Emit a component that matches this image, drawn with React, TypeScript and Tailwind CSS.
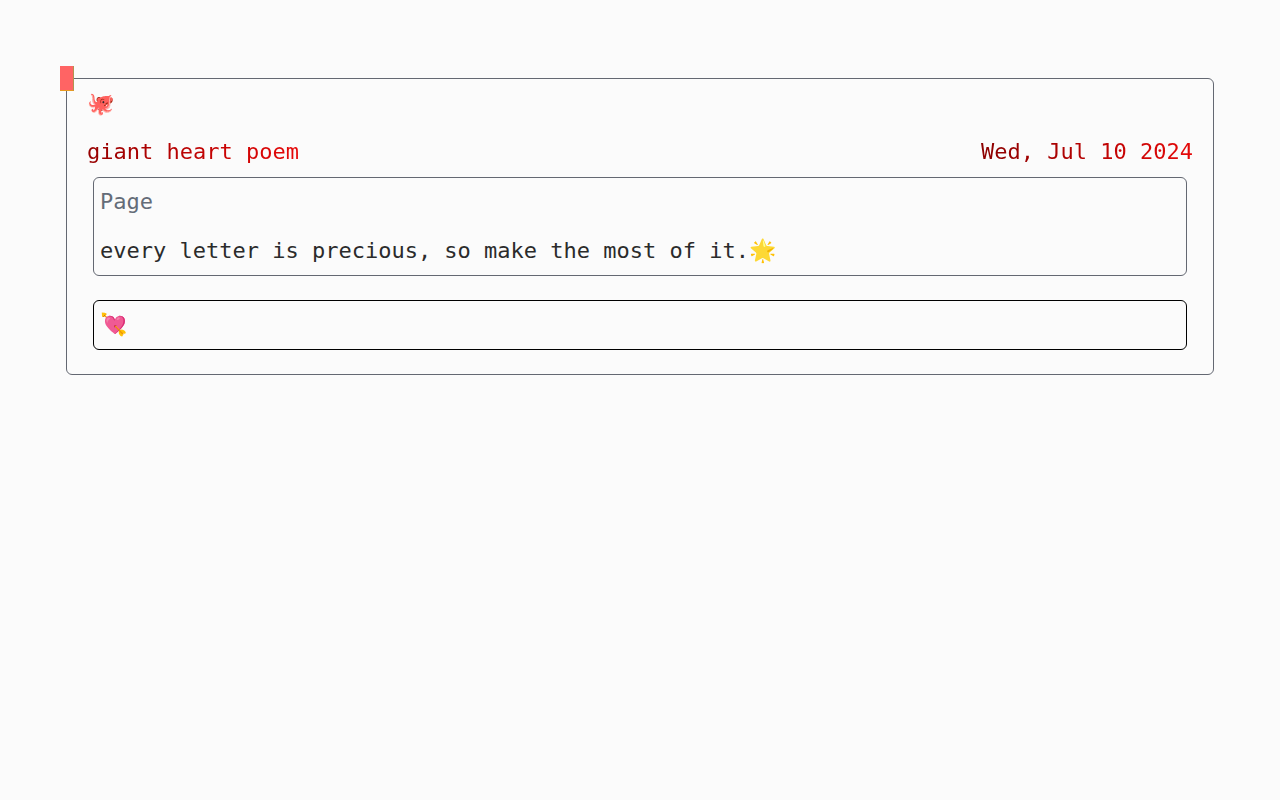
export default function App() {
  return (
    <div className="min-h-screen bg-[#fbfbfb] px-[66px] pt-[78px] font-['DejaVu_Sans_Mono',monospace] text-[22px] leading-[25px] text-[#2b2b2b]">
      <main className="relative rounded-md border border-[#646872] px-5 pt-3 pb-6">
        <span className="absolute -top-[13px] -left-[7px] h-[25px] w-[14px] border-r border-b border-r-[#b09450] border-b-[#e89a20] bg-[#ff6464]" />
        <div>🐙</div>
        <header className="mt-[23px] flex flex-wrap justify-between">
          <h1 className="bg-linear-to-r from-[#960000] to-[#e60808] bg-clip-text text-transparent">giant heart poem</h1>
          <time className="bg-linear-to-r from-[#8b0000] to-[#e60808] bg-clip-text text-transparent" dateTime="2024-07-10">Wed, Jul 10 2024</time>
        </header>
        <section className="mx-[6px] mt-[13px] rounded-md border border-[#646872] px-[6px] pt-[11px] pb-3">
          <h2 className="text-[#646c78]">Page</h2>
          <p className="mt-6">every letter is precious, so make the most of it.🌟</p>
        </section>
        <section className="mx-[6px] mt-6 rounded-md border border-black px-[6px] pt-[11px] pb-3">💘</section>
      </main>
    </div>
  );
}
